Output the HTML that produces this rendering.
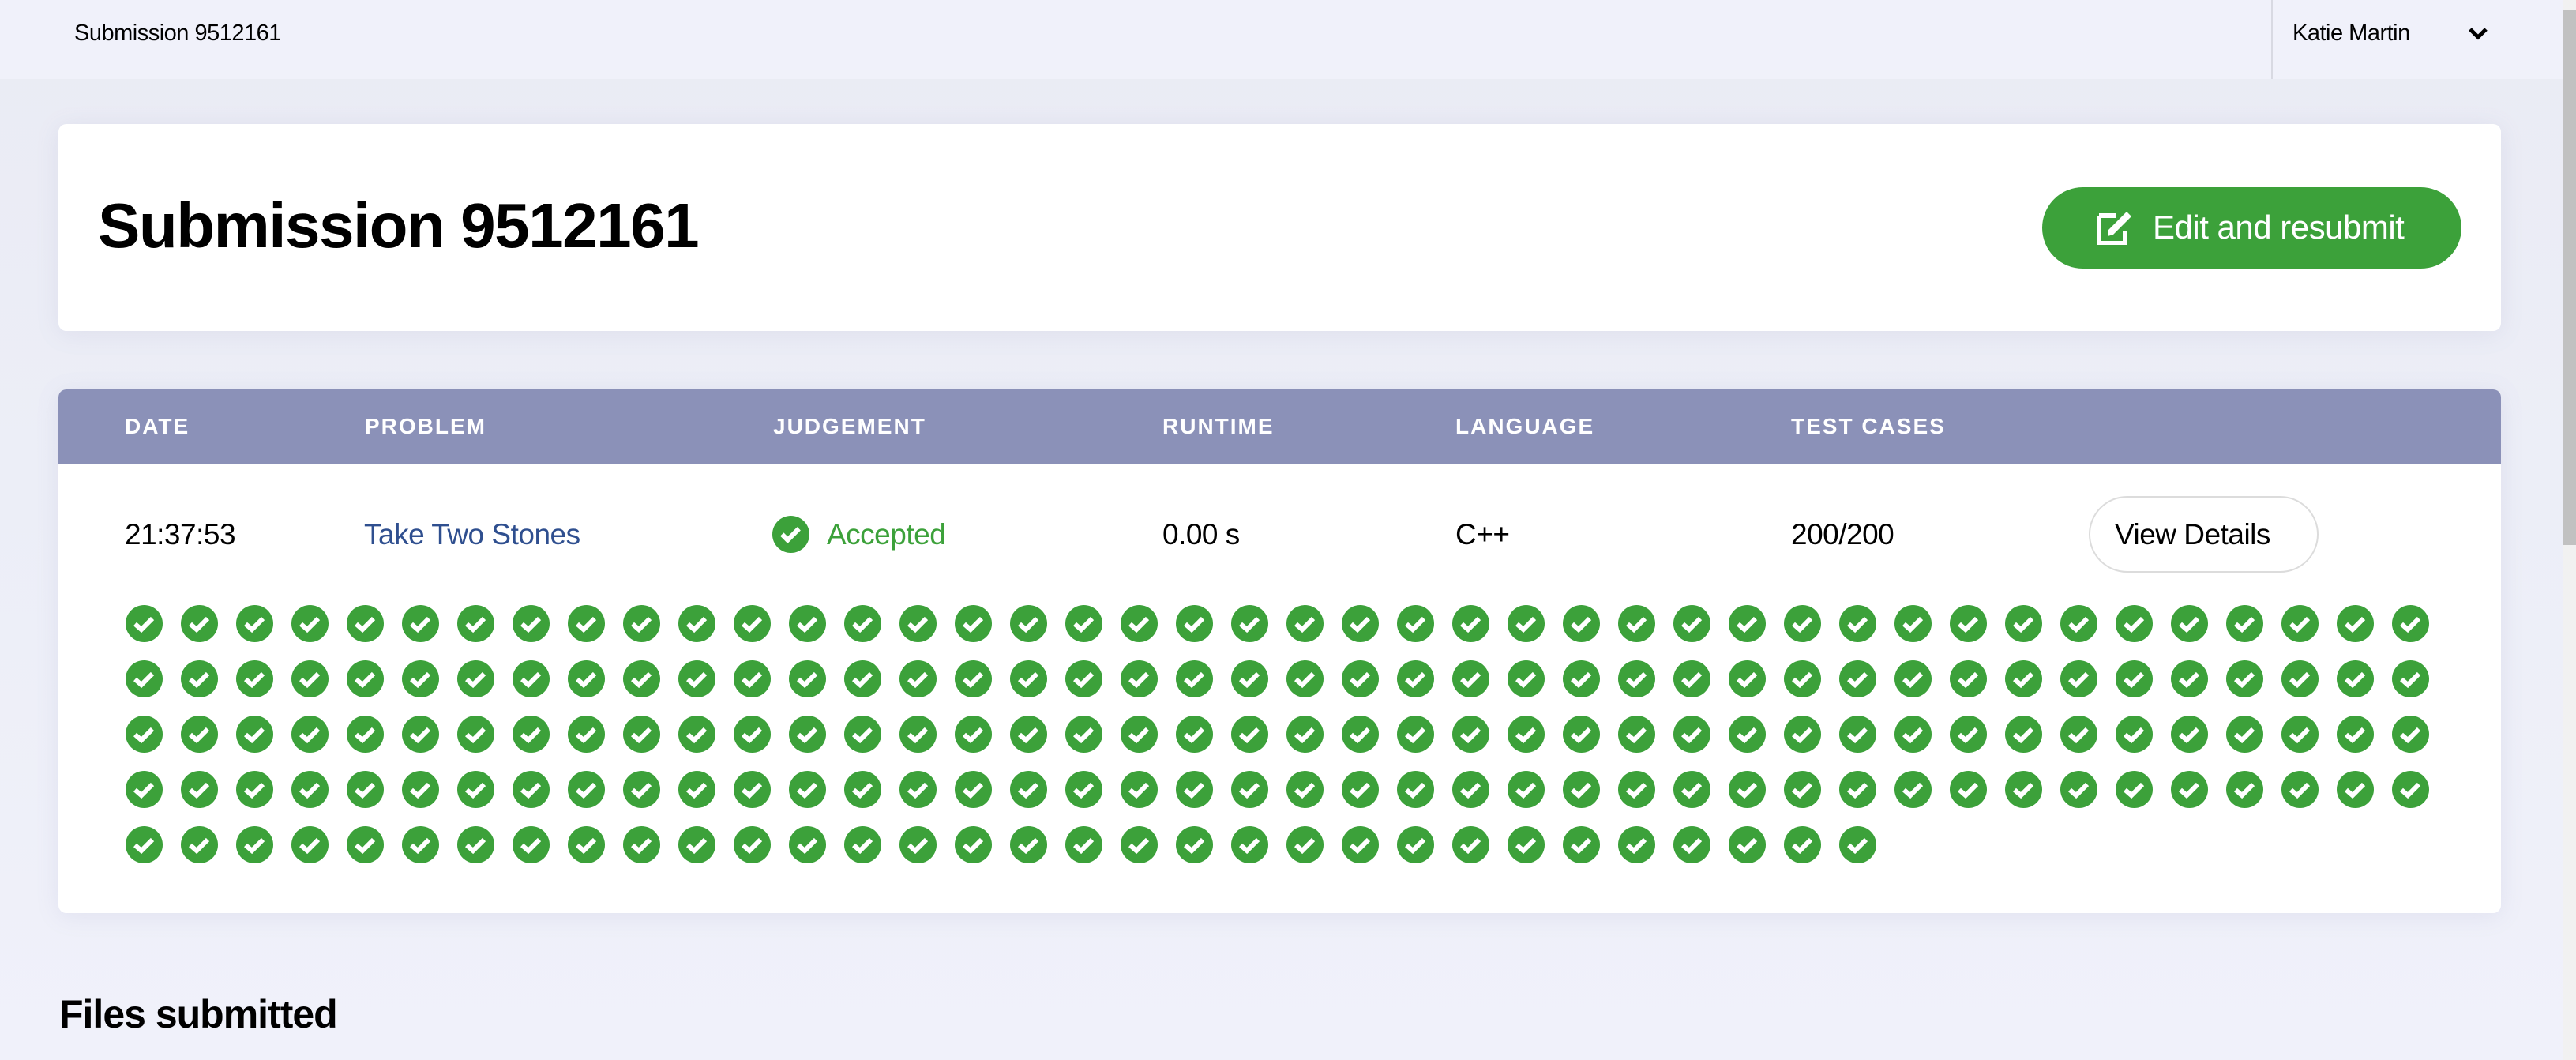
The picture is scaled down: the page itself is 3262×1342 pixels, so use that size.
<!DOCTYPE html>
<html><head><meta charset="utf-8"><style>
*{margin:0;padding:0;box-sizing:border-box}
body{width:3262px;height:1342px;overflow:hidden;background:linear-gradient(#eaebf4 0px,#eceef7 600px,#f0f1fa 1342px);font-family:"Liberation Sans",sans-serif;position:relative;color:#000}
.a{position:absolute;white-space:nowrap}
.nav{left:0;top:0;width:3246px;height:100px;background:#f0f1fa}
.card{background:#fff;border-radius:10px;box-shadow:0 4px 30px rgba(120,125,170,0.12)}
.h{color:#fff;font-weight:bold;font-size:28px;letter-spacing:2px;top:524px}
.b{font-size:37px;top:656px;letter-spacing:-0.5px}
</style></head><body>
<div class="a nav"></div>
<div class="a" style="left:2876px;top:0;width:2px;height:100px;background:#d8d9e2"></div>
<div class="a" style="left:94px;top:26px;font-size:29px;letter-spacing:-0.5px">Submission 9512161</div>
<div class="a" style="left:2903px;top:26px;font-size:29px;letter-spacing:-0.5px">Katie Martin</div>
<svg class="a" style="left:3125px;top:33px" width="26" height="20" viewBox="0 0 26 20"><path d="M3 4 L13 14 L23 4" stroke="#000" stroke-width="5" fill="none"/></svg>
<div class="a" style="left:3246px;top:0;width:16px;height:1342px;background:#f1f1f1"></div>
<div class="a" style="left:3246px;top:13px;width:16px;height:677px;background:#c1c1c1"></div>

<div class="a card" style="left:74px;top:157px;width:3093px;height:262px"></div>
<div class="a" style="left:124px;top:240px;font-size:80px;font-weight:bold;letter-spacing:-1.5px">Submission 9512161</div>
<div class="a" style="left:2586px;top:237px;width:531px;height:103px;border-radius:52px;background:#3ca13a"></div>
<svg class="a" style="left:2655px;top:265px" width="50" height="45" viewBox="0 0 50 45"><path d="M3 8 H25 M3 8 V43 H36 V28" stroke="#fff" stroke-width="6" fill="none"/><path d="M14 34 L15 26 L38 3 L44 9 L21 32 Z" fill="#fff"/></svg>
<div class="a" style="left:2726px;top:264px;font-size:42px;color:#fff;letter-spacing:-0.5px">Edit and resubmit</div>

<div class="a card" style="left:74px;top:493px;width:3093px;height:663px;overflow:hidden"><div style="height:95px;background:#8b91b8"></div></div>
<div class="a h" style="left:158px">DATE</div>
<div class="a h" style="left:462px">PROBLEM</div>
<div class="a h" style="left:979px">JUDGEMENT</div>
<div class="a h" style="left:1472px">RUNTIME</div>
<div class="a h" style="left:1843px">LANGUAGE</div>
<div class="a h" style="left:2268px">TEST CASES</div>
<div class="a b" style="left:158px">21:37:53</div>
<div class="a b" style="left:461px;color:#2f4f8f">Take Two Stones</div>
<svg class="a" style="left:978px;top:653px" width="47" height="47" viewBox="0 0 46 46"><circle cx="23" cy="23" r="23" fill="#3ca13a"/><path d="M12 23 L19 30 L33 16" stroke="#fff" stroke-width="6" fill="none"/></svg>
<div class="a b" style="left:1047px;color:#3ca13a">Accepted</div>
<div class="a b" style="left:1472px">0.00 s</div>
<div class="a b" style="left:1843px">C++</div>
<div class="a b" style="left:2268px">200/200</div>
<div class="a" style="left:2645px;top:628px;width:291px;height:97px;border:2px solid #dcdcdc;border-radius:49px;background:#fff"></div>
<div class="a b" style="left:2678px">View Details</div>

<svg class="a" style="left:0;top:0" width="3262" height="1342">
<defs><g id="k"><circle cx="23.5" cy="23.5" r="23.5" fill="#3ca13a"/><path d="M12 24 L20 31 L34 17" stroke="#fff" stroke-width="6" fill="none"/></g></defs>
<g id="cells"></g>
</svg>
<script>
var g=document.getElementById('cells'),s='';
for(var i=0;i<200;i++){var r=Math.floor(i/42),c=i%42;s+='<use href="#k" x="'+(159+c*70)+'" y="'+(766+r*70)+'"/>';}
g.innerHTML=s;
</script>

<div class="a" style="left:75px;top:1255px;font-size:50px;font-weight:bold;letter-spacing:-1px">Files submitted</div>
</body></html>
